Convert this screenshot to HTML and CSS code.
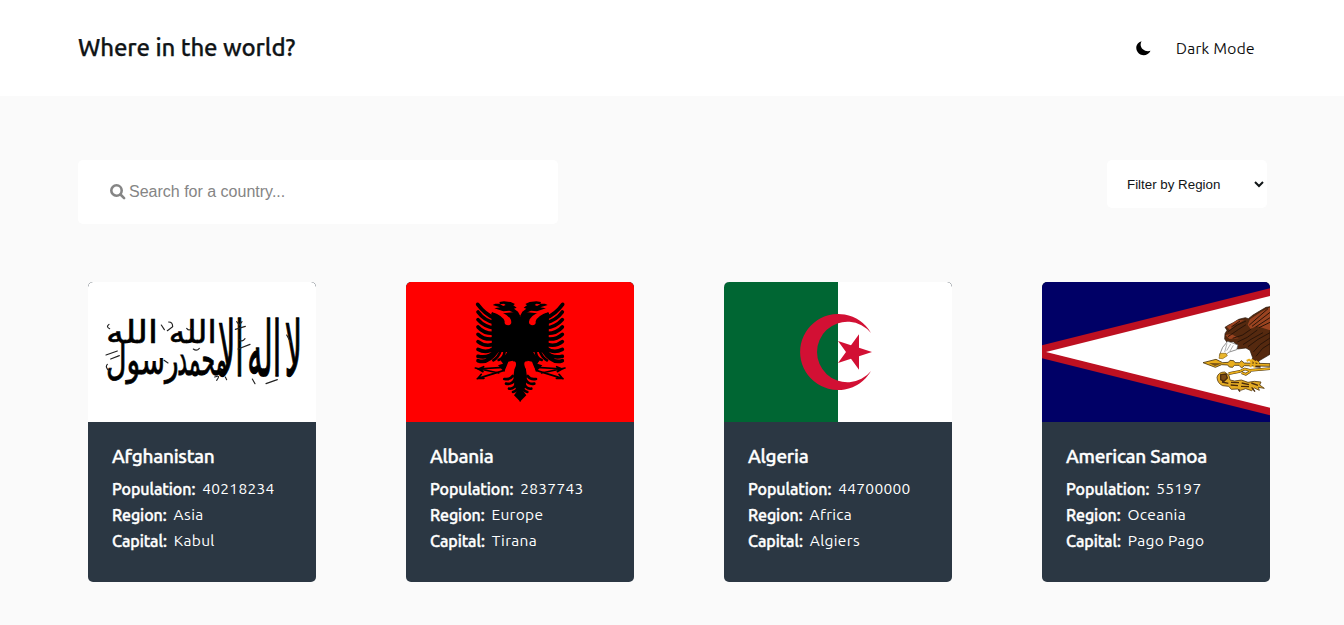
FILE: index.html
```html
<!DOCTYPE html>
<html lang="en">
<head>
<meta charset="utf-8">
<title>Where in the world?</title>
<link rel="stylesheet" href="styles.css">
</head>
<body>
<header class="header">
  <h1 class="title">Where in the world?</h1>
  <div class="mode">
    <svg class="moon" viewBox="0 0 15 15"><path d="M5.6.3C.7 1.5-1.300 7.100 1.600 11c3.300 4.700 10.500 4.200 12.900-1.200C9.800 11.300 4.800 8.300 4.600 3.800 4.600 2.400 5 1.200 5.600.3z"/></svg>
    <span class="mode-label">Dark Mode</span>
  </div>
</header>
<main class="main">
  <div class="controls">
    <label class="search">
      <svg class="search-icon" viewBox="0 0 16 16"><circle cx="6.500" cy="6.500" r="5.200"/><path d="M10.500 10.500l3.600 3.600"/></svg>
      <input class="search-input" type="text" placeholder="Search for a country...">
    </label>
    <select class="filter"><option>Filter by Region</option></select>
  </div>
  <div class="cards">
    <article class="card">
      <svg class="flag" viewBox="12 21 684 420">
        <rect x="12" y="21" width="684" height="420" fill="#fff"/>
        <g class="script">
          <text transform="translate(654 304) scale(1 2.850)" textLength="252" lengthAdjust="spacingAndGlyphs">لا اله الا</text>
          <text transform="translate(398 203) scale(1 1.200)" textLength="144" lengthAdjust="spacingAndGlyphs">الله</text>
          <text transform="translate(430 300) scale(1 1.750)" textLength="150" lengthAdjust="spacingAndGlyphs">محمد</text>
          <text transform="translate(284 298) scale(1 1.550)" textLength="218" lengthAdjust="spacingAndGlyphs">رسول</text>
          <text transform="translate(222 203) scale(1 1.200)" textLength="156" lengthAdjust="spacingAndGlyphs">الله</text>
        </g>
        <path class="marks" d="M232 150l9 14M254 141q12 0 12 14l-16 12M308 160q8 10 14 0M454 163l30-9M458 140l8 10 8-10M462 222l36-14M465 194q9 9 18-3M608 180l12 22M546 326l34-12M75 148q-10 8 2 13M66 240l34-12M80 252l26-10M70 268q-8 8 6 20M392 306q20-8 6 10M424 306l4 8M505 312l8 14M328 222q10 8 18-2M240 256l12 8"/>
      </svg>
      <div class="info">
        <h2 class="name">Afghanistan</h2>
        <p class="row"><b class="key">Population:</b><span class="value">40218234</span></p>
        <p class="row"><b class="key">Region:</b><span class="value">Asia</span></p>
        <p class="row"><b class="key">Capital:</b><span class="value">Kabul</span></p>
      </div>
    </article>
    <article class="card">
      <svg class="flag" viewBox="0 0 228 140">
        <rect width="228" height="140" fill="#f00"/>
        <g transform="translate(54 8) scale(.33333)">
          <g id="wing">
            <path d="M182 78L172 85 165 70 148 62 130 64 103 55 120 52 98 45 106 41 120 41 118 36 132 34 152 36 165 42 160 46 170 53 162 56 174 65 182 80V336L162 316 172 302 164 290 160 260 165 225 158 212 145 215 133 246 114 226 129 221 122 210 144 185 130 184 96 182V66L135 78 150 100 182 110z"/>
            <path d="M94 68L130 70 165 66 182 82V186H96z"/>
            <path class="feather" d="M104 84Q76 74 53 43M104 98Q73 92 54 66M104 114Q73 111 54 89M104 130Q72 132 54 111M104 146Q73 151 54 133M104 162Q75 172 54 155M104 174Q80 192 54 178M107 180Q87 207 54 199M112 182Q84 223 54 212"/>
            <path class="feather thin" d="M122 182Q116 202 100 211M134 184Q132 205 116 210M145 186Q143 207 127 211"/>
            <path class="feather thin" d="M158 258Q150 270 133 267M163 270Q156 284 138 281M168 280Q164 298 147 296M174 286Q174 303 159 306"/>
            <path class="claw" d="M130 232L52 237M130 242L52 266M116 249L46 234M55 237l16-7M55 237l14 8M54 265l10-12M54 265l18 0"/>
            <path d="M97 62Q140 66 152 88 158 104 145 106 132 106 134 94 130 78 97 66zM162 214Q172 216 166 232 158 247 143 248 133 246 138 234 146 219 162 214z" fill="#f00"/>
            <path d="M120 43l12-2 5 4-7 3z" fill="#f00"/>
          </g>
          <use href="#wing" transform="matrix(-1 0 0 1 361 0)"/>
        </g>
      </svg>
      <div class="info">
        <h2 class="name">Albania</h2>
        <p class="row"><b class="key">Population:</b><span class="value">2837743</span></p>
        <p class="row"><b class="key">Region:</b><span class="value">Europe</span></p>
        <p class="row"><b class="key">Capital:</b><span class="value">Tirana</span></p>
      </div>
    </article>
    <article class="card">
      <svg class="flag" viewBox="12 21 684 420">
        <rect x="12" y="21" width="684" height="420" fill="#fff"/>
        <rect x="12" y="21" width="342" height="420" fill="#063"/>
        <path d="M453 174A114 114 0 1 0 453 288A91 91 0 1 1 453 174z" fill="#d21034"/>
        <path d="M456 231L417 218V178L393 211 354 198 378 231 354 264 393 251 417 284V244z" fill="#d21034"/>
      </svg>
      <div class="info">
        <h2 class="name">Algeria</h2>
        <p class="row"><b class="key">Population:</b><span class="value">44700000</span></p>
        <p class="row"><b class="key">Region:</b><span class="value">Africa</span></p>
        <p class="row"><b class="key">Capital:</b><span class="value">Algiers</span></p>
      </div>
    </article>
    <article class="card">
      <svg class="flag" viewBox="18 21 684 420">
        <rect x="18" y="21" width="684" height="420" fill="#006"/>
        <path d="M18 211L702 40V421L18 250z" fill="#bd1021"/>
        <path d="M30 231L702 63V398z" fill="#fff"/>
        <g stroke-linejoin="round">
          <path d="M702 95L690 97 671 108 651 120 637 131 628 128 608 133 592 143 578 150 567 157 573 166 567 176 566 192 573 202 592 200 604 210 604 222 630 219 642 226 650 248 646 262 657 276 673 277 668 258 682 250 702 238z" fill="#55290f" stroke="#241005" stroke-width="2"/>
          <path d="M702 97L676 110 642 133 635 149 644 162 662 153 702 166zM603 136L572 155 582 165 597 149 625 136zM568 180l12 12 28-2-22-13z" fill="#9a4320"/>
          <path d="M640 150l56-49M648 154l54-42M659 156l43-28M669 158l33-16M586 156l26-18M576 170l28-20 26-12M576 185l32-22 22-14M590 190l30-10 26-18M604 201l30-14 30-22M621 209l24-16 36-20M636 215l30-22 36-20M652 231l20-22 30-20M660 244l20-24 22-14" fill="none" stroke="#2a1509" stroke-width="3"/>
          <path d="M575 199L560 217 550 241 565 245 577 232 602 224 606 210 590 204z" fill="#fff" stroke="#555" stroke-width="2"/>
          <path d="M573 205l-7 26M584 207l-12 20M592 211l-10 17" fill="none" stroke="#888" stroke-width="2"/>
          <path d="M552 235L549 250 560 251 574 242 570 235z" fill="#e9b52b" stroke="#8a6414" stroke-width="2"/>
          <path d="M501 263L540 253 560 263 577 262 582 256 593 257 597 263 611 263 616 257 625 264 702 266V274L625 272 617 279 609 271 595 271 590 277 580 276 575 270 557 269 538 277z" fill="#e9ae1d" stroke="#4b3510" stroke-width="2.500"/>
          <path d="M519 264l40 1-22 8z" fill="#7b5518"/>
          <path d="M632 258l8-4 7 8-4 15M646 254l10 6-1 18M659 258l10 7" fill="none" stroke="#e9ae1d" stroke-width="6"/>
          <path d="M578 296L612 289 626 282 641 286 702 281M617 293l12 5 14-9" fill="none" stroke="#4b3510" stroke-width="8"/>
          <path d="M578 296L612 289 626 282 641 286 702 281M617 293l12 5 14-9" fill="none" stroke="#e9ae1d" stroke-width="5"/>
          <path d="M566 291Q547 291 543 307 544 325 560 332L578 334 586 343 604 342 614 346 629 341 647 347 655 339 670 346 667 337 685 340 671 330 675 321 655 319 636 322 616 315 596 318 582 315 579 301z" fill="#e3ab24" stroke="#5a3e12" stroke-width="2.500"/>
          <path d="M554 299l16-2 4 12-10 10-10-5zM558 321l19 4M585 322l24 1M584 330l22 2M617 324l22 5M615 334l24 1M646 324l20 7M647 337l10 13M607 343l5 7" fill="#7a4b16" stroke="#4b2c0c" stroke-width="4"/>
        </g>
      </svg>
      <div class="info">
        <h2 class="name">American Samoa</h2>
        <p class="row"><b class="key">Population:</b><span class="value">55197</span></p>
        <p class="row"><b class="key">Region:</b><span class="value">Oceania</span></p>
        <p class="row"><b class="key">Capital:</b><span class="value">Pago Pago</span></p>
      </div>
    </article>
  </div>
</main>
</body>
</html>
```
FILE: styles.css
```css
* { box-sizing: border-box; }
body {
  margin: 0;
  height: 625px;
  overflow: hidden;
  background: #fafafa;
  color: #111517;
  font-family: Ubuntu, "Noto Sans", sans-serif;
  font-size: 16px;
}
.header {
  height: 96px;
  padding: 0 89px 0 78px;
  display: flex;
  align-items: center;
  justify-content: space-between;
  background: #fff;
}
.title { margin: 0 0 2px; font-size: 24px; font-weight: 500; letter-spacing: -.12px; -webkit-text-stroke: .25px; }
.mode { display: flex; align-items: center; gap: 25px; }
.moon { width: 15px; height: 15px; fill: #000; }
.mode-label { font-size: 15.500px; font-weight: 300; letter-spacing: .4px; color: #000; -webkit-text-stroke: .15px; }
.main { padding: 64px 74px 0 78px; }
.controls {
  display: flex;
  justify-content: space-between;
  align-items: flex-start;
  height: 122px;
  padding-right: 3px;
}
.search {
  width: 480px;
  height: 64px;
  padding: 0 32px;
  display: flex;
  align-items: center;
  gap: 4px;
  background: #fff;
  border-radius: 5px;
}
.search-icon { width: 16px; height: 16px; margin-right: -1px; fill: none; stroke: #858585; stroke-width: 2.600; stroke-linecap: round; }
.search-input {
  flex: 1;
  border: 0;
  padding: 0;
  outline: 0;
  font: 16px "Liberation Sans", Arial, sans-serif;
}
.search-input::placeholder { color: #858585; }
.filter {
  width: 160px;
  height: 48px;
  padding: 0 0 0 16px;
  border: 0;
  border-radius: 5px;
  background: #fff;
  color: #111517;
  font: 13.333px "Liberation Sans", Arial, sans-serif;
}
.cards { display: flex; justify-content: space-between; padding-left: 10px; }
.card {
  width: 228px;
  height: 300px;
  border-radius: 5px;
  overflow: hidden;
  background: #2b3743;
  color: #fff;
}
.flag { display: block; width: 228px; height: 140px; border-radius: 5px 5px 0 0; }
.script { direction: rtl; font: 80px "DejaVu Sans", sans-serif; word-spacing: -16px; fill: #000; stroke: #000; stroke-width: 1.500px; }
.marks { fill: none; stroke: #222; stroke-width: 3.500; stroke-linecap: round; }
.feather { fill: none; stroke: #000; stroke-width: 11; stroke-linecap: round; }
.thin { stroke-width: 8; }
.claw { fill: none; stroke: #000; stroke-width: 5; stroke-linecap: round; }
.info { padding: 21px 24px; }
.name { margin: 0 0 6px; font-size: 19px; line-height: 27px; font-weight: 500; letter-spacing: -.25px; white-space: nowrap; -webkit-text-stroke: .4px; }
.row { margin: 0; display: flex; gap: 7px; font-size: 16px; line-height: 26px; }
.key { font-weight: 500; letter-spacing: -.08px; -webkit-text-stroke: .4px; }
.value { font-size: 15.500px; letter-spacing: .3px; }
```
